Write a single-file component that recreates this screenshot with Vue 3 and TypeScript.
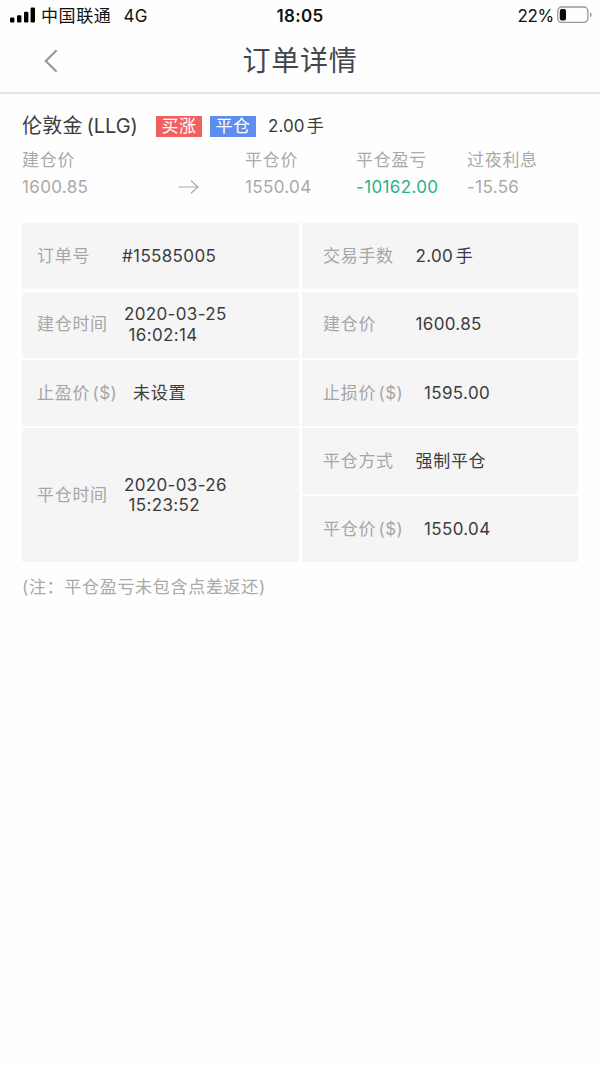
<script setup lang="ts">
interface Cell {
  label: string
  lines: string[]
  offset: string
  tall?: boolean
}

interface Figure {
  label: string
  value: string
  profit?: boolean
}

const opening: Figure = { label: '建仓价', value: '1600.85' }
const figures: Figure[] = [
  { label: '平仓价', value: '1550.04' },
  { label: '平仓盈亏', value: '-10162.00', profit: true },
  { label: '过夜利息', value: '-15.56' },
]

const cells: Cell[] = [
  { label: '订单号', lines: ['#15585005'], offset: 'v-order' },
  { label: '交易手数', lines: ['2.00手'], offset: 'v-right' },
  { label: '建仓时间', lines: ['2020-03-25', '16:02:14'], offset: 'v-time' },
  { label: '建仓价', lines: ['1600.85'], offset: 'v-right' },
  { label: '止盈价($)', lines: ['未设置'], offset: 'v-stop' },
  { label: '止损价($)', lines: ['1595.00'], offset: 'v-price' },
  { label: '平仓时间', lines: ['2020-03-26', '15:23:52'], offset: 'v-time', tall: true },
  { label: '平仓方式', lines: ['强制平仓'], offset: 'v-right' },
  { label: '平仓价($)', lines: ['1550.04'], offset: 'v-price' },
]

// Separates Latin and Chinese runs so a thin gap can be set between them
const runs = (text: string): string[] => text.match(/[\u4e00-\u9fff]+|[^\u4e00-\u9fff]+/g) ?? []
const isHan = (text: string): boolean => /[\u4e00-\u9fff]/.test(text)
</script>

<template>
  <div class="screen">
    <div class="status">
      <div class="carrier">
        <svg class="signal" width="26" height="16" viewBox="0 0 26 16">
          <rect x="0" y="10.5" width="4.4" height="5" rx="1.2" />
          <rect x="7" y="8.2" width="4.4" height="7.3" rx="1.2" />
          <rect x="14" y="4.8" width="4.4" height="10.7" rx="1.2" />
          <rect x="20.6" y="0.5" width="4.4" height="15" rx="1.2" />
        </svg>
        <span class="operator">中国联通</span>
        <span class="network">4G</span>
      </div>
      <span class="clock">18:05</span>
      <div class="power">
        <span class="percent">22%</span>
        <svg width="36" height="18" viewBox="0 0 36 18">
          <rect x="0.8" y="1" width="30" height="15.4" rx="3.8" fill="none" stroke="#9a9a9a" stroke-width="1.3" />
          <rect x="2.8" y="3" width="6.2" height="11.4" rx="2" fill="#080808" />
          <path d="M33 6.3c2.2.7 2.2 4.2 0 4.9z" fill="#999" />
        </svg>
      </div>
    </div>

    <header class="nav">
      <svg class="back" width="14" height="24" viewBox="0 0 14 24">
        <path d="M12.6 1.3L1.8 12L12.6 22.7" fill="none" stroke="#999" stroke-width="2.2" />
      </svg>
      <h1>订单详情</h1>
    </header>

    <main>
      <div class="product">
        <span class="name">伦敦金<span class="code">(LLG)</span></span>
        <span class="tag buy">买涨</span>
        <span class="tag close">平仓</span>
        <span class="lots">2.00<span class="unit">手</span></span>
      </div>

      <div class="figures">
        <div class="figure">
          <span class="han">{{ opening.label }}</span>
          <span class="number">{{ opening.value }}</span>
        </div>
        <svg class="arrow" width="22" height="16" viewBox="0 0 22 16">
          <path d="M0.5 8H20M13 1.7L20 8L13 14.3" fill="none" stroke="#aaa" stroke-width="1.2" />
        </svg>
        <div v-for="f in figures" :key="f.label" class="figure">
          <span class="han">{{ f.label }}</span>
          <span class="number" :class="{ profit: f.profit }">{{ f.value }}</span>
        </div>
      </div>

      <div class="table">
        <div v-for="(c, i) in cells" :key="i" class="cell" :class="{ tall: c.tall }">
          <div class="label" :class="c.offset">
            <span v-for="r in runs(c.label)" :key="r" class="run" :class="{ han: isHan(r) }">{{ r }}</span>
          </div>
          <div class="value">
            <div v-for="line in c.lines" :key="line" class="line">
              <span v-for="r in runs(line)" :key="r" class="run" :class="{ han: isHan(r) }">{{ r }}</span>
            </div>
          </div>
        </div>
      </div>

      <p class="note">(注：平仓盈亏未包含点差返还)</p>
    </main>
  </div>
</template>

<style>
html,
body {
  background: #fefefe;
}
</style>

<style scoped>
.screen {
  width: 600px;
  height: 1067px;
  overflow: hidden;
  background: #fefefe;
  color: #3c3c3e;
  font-family: Inter, "Noto Sans CJK SC", sans-serif;
  font-size: 17px;
  letter-spacing: 0.35px;
  white-space: nowrap;
}
.han {
  letter-spacing: 0.7px;
}
.status {
  display: grid;
  grid-template-columns: 1fr auto 1fr;
  align-items: center;
  height: 30px;
  color: #111;
}
.carrier {
  display: flex;
  align-items: center;
  padding-left: 10px;
  line-height: 20px;
}
.signal {
  margin-right: 5px;
}
.operator {
  padding-top: 2px;
  letter-spacing: 0.6px;
}
.network {
  margin-left: 12px;
  padding-top: 1px;
}
.clock {
  padding-top: 2px;
  font-weight: 600;
}
.power {
  display: flex;
  align-items: center;
  justify-content: flex-end;
  gap: 3px;
  padding-right: 7px;
  letter-spacing: -0.3px;
}
.percent {
  padding-top: 1px;
}
.nav {
  display: grid;
  grid-template-columns: 44px 1fr 44px;
  align-items: center;
  height: 62px;
  border-bottom: 2px solid #e5e5e5;
}
.back {
  justify-self: end;
  position: relative;
  left: 14px;
}
h1 {
  margin: 0;
  font-size: 28px;
  font-weight: 400;
  line-height: 60px;
  letter-spacing: 0.8px;
  text-align: center;
  color: #44464e;
}
main {
  padding: 19px 22px 0;
}
.product {
  display: flex;
  align-items: center;
  height: 26px;
  line-height: 26px;
}
.name {
  font-size: 20px;
  width: 134px;
  letter-spacing: 0.2px;
}
.code {
  margin-left: 4px;
  letter-spacing: -0.1px;
}
.tag {
  width: 46px;
  height: 21px;
  margin: 0 8px 0 0;
  line-height: 20px;
  text-align: center;
  letter-spacing: 0.6px;
  color: #fff;
}
.buy {
  background: #f1605f;
}
.close {
  background: #5e8df0;
  margin-right: 12px;
}
.lots {
  letter-spacing: 0.1px;
}
.unit {
  margin-left: 2px;
}
.figures {
  display: grid;
  grid-template-columns: 156px 67px 111px 111px 1fr;
  margin-top: 8px;
  color: #a9a9a9;
}
.figure {
  display: flex;
  flex-direction: column;
  line-height: 27px;
}
.arrow {
  align-self: end;
  margin-bottom: 6px;
}
.profit {
  color: #2bb184;
}
.table {
  display: grid;
  grid-template-columns: 277px 276.5px;
  grid-auto-rows: 66px;
  gap: 2.2px 2.5px;
  margin-top: 22.4px;
}
.cell {
  display: flex;
  align-items: center;
  padding-left: 15px;
  background: #f5f5f5;
}
.cell:nth-child(even),
.cell:last-child {
  padding-left: 21.5px;
}
.tall {
  grid-row: span 2;
}
.label {
  line-height: 20.5px;
  color: #a6a6a6;
}
.v-order {
  width: 85px;
}
.v-time {
  width: 87px;
}
.v-stop {
  width: 96px;
}
.v-right {
  width: 92.5px;
}
.v-price {
  width: 101px;
}
.line {
  line-height: 20.5px;
}
.line + .line {
  padding-left: 4.5px;
}
.run + .run {
  margin-left: 2.5px;
}
.note {
  margin: 12px 0 0;
  line-height: 26px;
  letter-spacing: 0.7px;
  color: #a9a9a9;
}
</style>
